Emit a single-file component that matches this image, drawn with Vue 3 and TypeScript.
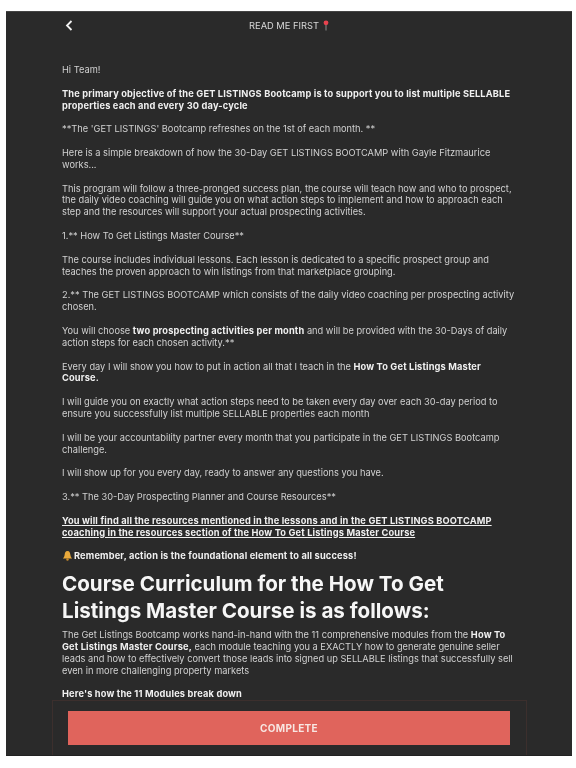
<script setup lang="ts">
</script>

<template>
  <div class="frame">
    <header class="bar">
      <svg class="back" width="8" height="11" viewBox="0 0 8 11"><path d="M6.500 1 L2 5.500 L6.500 10" fill="none" stroke="#f2f2f2" stroke-width="1.800"/></svg>
      <div class="title">READ ME FIRST
        <svg class="pin" width="6" height="11" viewBox="0 0 6 11"><circle cx="3" cy="2.800" r="2.400" fill="#e8434f"/><path d="M3 5v5.500" stroke="#8a8a8a" stroke-width="1"/></svg>
      </div>
    </header>
    <main class="content">
      <p>Hi Team!</p>
      <p><b>The primary objective of the GET LISTINGS Bootcamp is to support you to list multiple SELLABLE properties each and every 30 day-cycle</b></p>
      <p>**The 'GET LISTINGS' Bootcamp refreshes on the 1st of each month. **</p>
      <p>Here is a simple breakdown of how the 30-Day GET LISTINGS BOOTCAMP with Gayle Fitzmaurice works...</p>
      <p>This program will follow a three-pronged success plan, the course will teach how and who to prospect, the daily video coaching will guide you on what action steps to implement and how to approach each step and the resources will support your actual prospecting activities.</p>
      <p>1.** How To Get Listings Master Course**</p>
      <p>The course includes individual lessons. Each lesson is dedicated to a specific prospect group and teaches the proven approach to win listings from that marketplace grouping.</p>
      <p>2.** The GET LISTINGS BOOTCAMP which consists of the daily video coaching per prospecting activity chosen.</p>
      <p>You will choose <b>two prospecting activities per month</b> and will be provided with the 30-Days of daily action steps for each chosen activity.**</p>
      <p>Every day I will show you how to put in action all that I teach in the <b>How To Get Listings Master Course.</b></p>
      <p>I will guide you on exactly what action steps need to be taken every day over each 30-day period to ensure you successfully list multiple SELLABLE properties each month</p>
      <p>I will be your accountability partner every month that you participate in the GET LISTINGS Bootcamp challenge.</p>
      <p>I will show up for you every day, ready to answer any questions you have.</p>
      <p>3.** The 30-Day Prospecting Planner and Course Resources**</p>
      <p><b class="u">You will find all the resources mentioned in the lessons and in the GET LISTINGS BOOTCAMP coaching in the resources section of the How To Get Listings Master Course</b></p>
      <p><svg class="bell" width="11" height="11" viewBox="0 0 10 10"><path d="M5 .8C3 .8 2.600 2.500 2.400 4.400 2.200 6 1.600 7 .8 7.800h8.400C8.400 7 7.800 6 7.600 4.400 7.400 2.500 7 .8 5 .8Z" fill="#e9a93b"/><circle cx="5" cy="8.600" r="1.100" fill="#c98a2a"/></svg><b>Remember, action is the foundational element to all success!</b></p>
      <h2>Course Curriculum for the How To Get Listings Master Course is as follows:</h2>
      <p>The Get Listings Bootcamp works hand-in-hand with the 11 comprehensive modules from the <b>How To Get Listings Master Course,</b> each module teaching you a EXACTLY how to generate genuine seller leads and how to effectively convert those leads into signed up SELLABLE listings that successfully sell even in more challenging property markets</p>
      <p><b>Here's how the 11 Modules break down</b></p>
    </main>
    <footer class="foot">
      <button class="complete">COMPLETE</button>
    </footer>
  </div>
</template>

<style>
html, body { margin: 0; background: #fff; }
</style>

<style scoped>
.frame {
  box-sizing: border-box;
  width: 566px;
  height: 745px;
  margin: 11px 0 0 6px;
  background: #2a2a2a;
  color: #d2d2d2;
  font-family: Inter, "Liberation Sans", sans-serif;
  display: flex;
  flex-direction: column;
  overflow: hidden;
  border-top: 1px solid #444;
  border-bottom: 1px solid #222;
  filter: blur(0.35px);
}
.bar {
  height: 27px;
  flex: none;
  position: relative;
  display: flex;
  align-items: center;
  justify-content: center;
}
.back { position: absolute; left: 59px; top: 8px; }
.title {
  font-size: 9.300px;
  color: #d8d8d8;
  display: flex;
  align-items: center;
  gap: 4px;
}
.content {
  flex: 1;
  padding: 25px 52px 0 56px;
  min-height: 0;
}
p {
  margin: 0 0 11.900px;
  font-size: 9.250px;
  line-height: 11.850px;
}
b { font-weight: 700; color: #f0f0f0; letter-spacing: 0.16px; }
.u { text-decoration: underline; }
.bell { vertical-align: -2px; margin-right: 1px; }
h2 {
  margin: -3px 0 5px;
  font-size: 20.600px;
  line-height: 26.500px;
  font-weight: 700;
  color: #f6f6f6;
}
.foot {
  flex: none;
  height: 55px;
  box-sizing: border-box;
  margin: 0 45px 0 46px;
  padding: 10px 16px 0 15px;
  border: 1px solid #3c2f2d;
  border-bottom: none;
}
.complete {
  display: block;
  width: 100%;
  height: 34px;
  border: 0;
  background: #e0645c;
  color: #f8e6e2;
  font: 700 10px Inter, "Liberation Sans", sans-serif;
  letter-spacing: 0.3px;
}
</style>
